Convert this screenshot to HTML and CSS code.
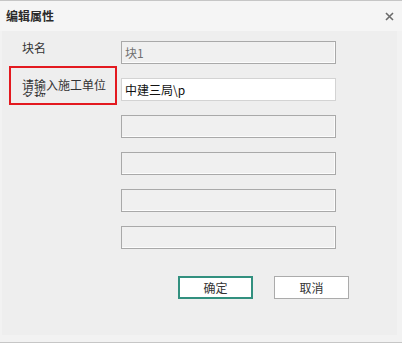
FILE: index.html
```html
<!DOCTYPE html>
<html lang="zh-CN">
<head>
    <meta charset="UTF-8">
    <title>编辑属性</title>
    <link rel="stylesheet" href="styles.css">
</head>
<body>

    <div class="dialog">
        <!-- Title bar -->
        <div class="titlebar">
            <span class="title">编辑属性</span>
            <svg class="close" width="9" height="9" viewBox="0 0 9 9">
                <path d="M1 1 L8 8 M8 1 L1 8" stroke="#6b6b6b" stroke-width="1.6"/>
            </svg>
        </div>

        <div class="frame">
            <div class="panel">
                <div class="form">
                    <div class="label">块名</div>
                    <input class="field disabled" type="text" value="块1" disabled>

                    <div class="label marked">
                        <div class="label-text">请输入施工单位名称</div>
                        <div class="highlight"></div>
                    </div>
                    <input class="field" type="text" value="中建三局\p">

                    <div class="label"></div>
                    <input class="field disabled" type="text" disabled>

                    <div class="label"></div>
                    <input class="field disabled" type="text" disabled>

                    <div class="label"></div>
                    <input class="field disabled" type="text" disabled>

                    <div class="label"></div>
                    <input class="field disabled" type="text" disabled>
                </div>

                <div class="buttons">
                    <button class="btn primary">确定</button>
                    <button class="btn">取消</button>
                </div>
            </div>
        </div>
    </div>

</body>
</html>
```

FILE: styles.css
```css
/* styles.css */

body {
    margin: 0;
    padding: 0;
    font-family: "Noto Sans CJK SC", "Liberation Sans", sans-serif;
    font-size: 12px;
    color: #333;
    background-color: #f2f2f2;
}

.dialog {
    width: 402px;
    height: 343px;
    box-sizing: border-box;
    border-top: 1px solid #c6c6c6;
    border-bottom: 1px solid #c6c6c6;
    display: flex;
    flex-direction: column;
}

/* Title bar */
.titlebar {
    height: 30px;
    background-color: #f5f5f5;
    display: flex;
    align-items: center;
    justify-content: space-between;
    padding: 0 8px 0 6px;
}

.title {
    font-weight: bold;
    font-size: 12px;
    line-height: 12px;
    color: #2b2b2b;
}

.close {
    display: block;
    margin-top: 1px;
}

/* Body */
.frame {
    flex: 1;
    background-color: #f2f2f2;
    padding: 0 5px 7px 2px;
    display: flex;
}

.panel {
    flex: 1;
    background-color: #eeeeee;
    padding: 10px 0 0 20px;
}

.form {
    display: grid;
    grid-template-columns: 99px 215px;
    row-gap: 14px;
}

.label {
    position: relative;
    height: 23px;
}

.label-text,
.label:not(.marked) {
    font-size: 12px;
    line-height: 12px;
    color: #333;
}

.label:not(.marked) {
    padding-top: 1px;
    box-sizing: border-box;
}

.label-text {
    width: 90px;
    height: 18px;
    margin-top: 1px;
    overflow: hidden;
}

/* red annotation box round the label */
.highlight {
    position: absolute;
    left: -13px;
    top: -12px;
    width: 108px;
    height: 39px;
    box-sizing: border-box;
    border: 2px solid #e3191f;
}

.field {
    width: 215px;
    height: 23px;
    box-sizing: border-box;
    margin: 0;
    padding: 0 3px;
    font-family: "Noto Sans CJK SC", "Liberation Sans", sans-serif;
    font-size: 12px;
    color: #111;
    background-color: #fff;
    border: 1px solid #d3d3d3;
    outline: none;
}

.field.disabled {
    color: #707070;
    background-color: #f0f0f0;
    border: 1px solid #a9a9a9;
    box-shadow: inset -1px -1px 0 #fcfcfc;
}

/* Buttons */
.buttons {
    display: flex;
    gap: 21px;
    padding-left: 156px;
    margin-top: 27px;
}

.btn {
    width: 75px;
    height: 23px;
    box-sizing: border-box;
    padding: 0;
    font-family: "Noto Sans CJK SC", "Liberation Sans", sans-serif;
    font-size: 12px;
    color: #333;
    background-color: #fff;
    border: 1px solid #ababab;
}

.btn.primary {
    border: 2px solid #32907f;
}
```
